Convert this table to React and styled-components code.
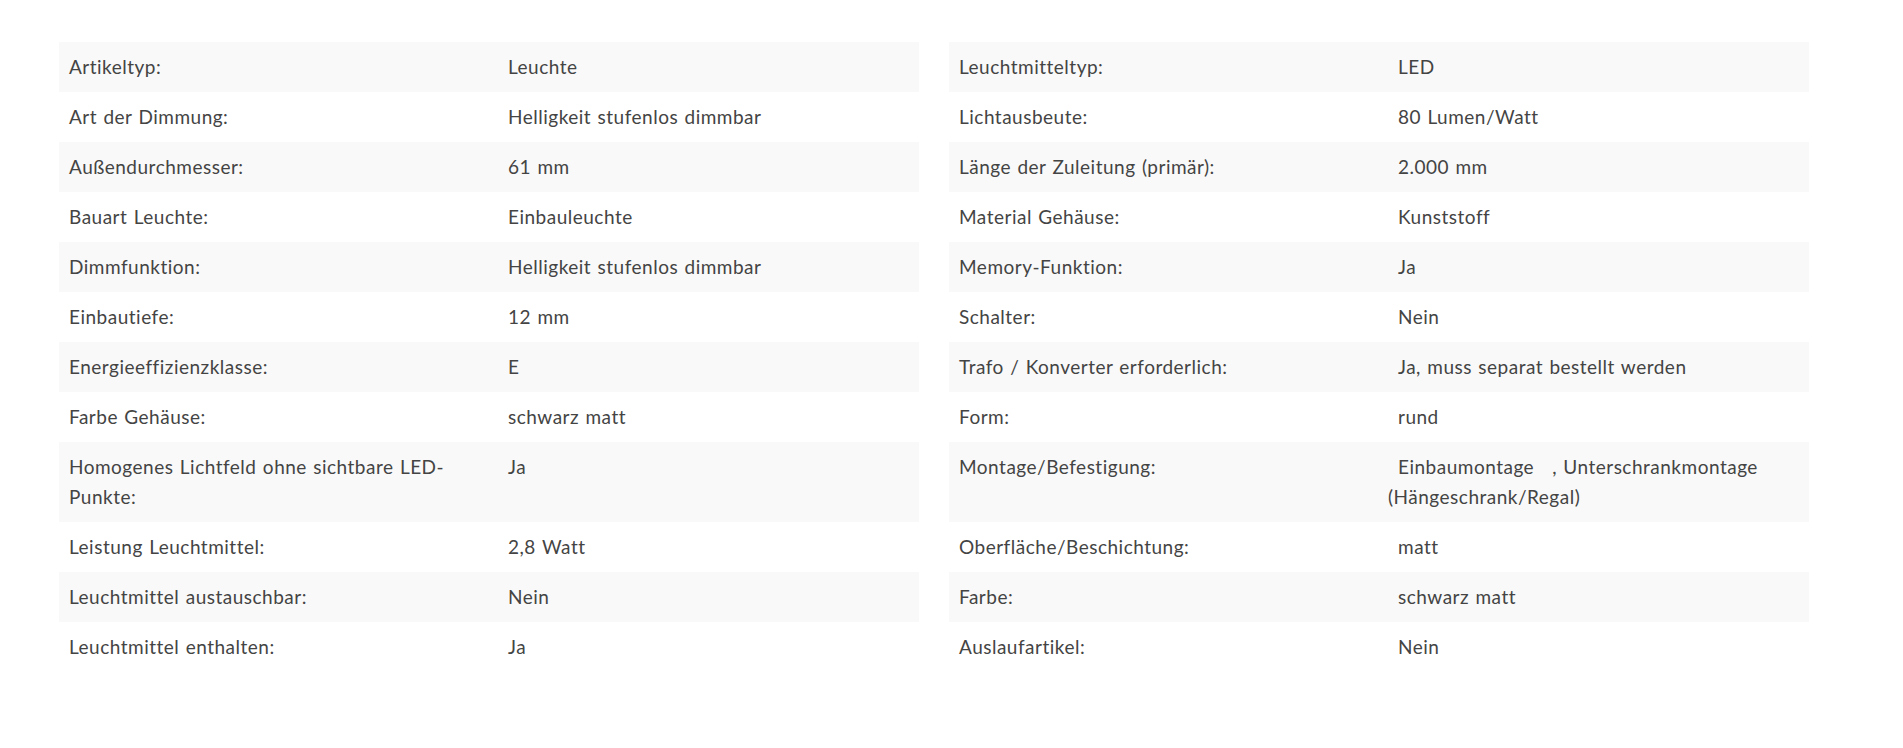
import React from "react";
import styled, { createGlobalStyle } from "styled-components";

const GlobalStyle = createGlobalStyle`
  body {
    margin: 0;
    background: #ffffff;
    font-family: Lato, "Open Sans", sans-serif;
    color: #444444;
  }
`;

const Page = styled.div`
  padding: 42px 0 0 59px;
  display: flex;
  gap: 30px;
  align-items: flex-start;
`;

const SpecTable = styled.table`
  width: 860px;
  border-collapse: collapse;
  table-layout: fixed;
  font-size: 19px;
  line-height: 30px;
  letter-spacing: 0.5px;
  word-spacing: 1px;

  tr:nth-child(odd) {
    background: #f9f9f9;
  }
`;

const Label = styled.td`
  box-sizing: border-box;
  width: 429px;
  padding: 10px;
  vertical-align: top;
`;

const Value = styled.td`
  box-sizing: border-box;
  padding: 10px;
  vertical-align: top;
  text-indent: 10px;
`;

const Part = styled.span`
  margin-right: ${(p) => p.$gap || 0}px;
`;

const leftRows = [
  ["Artikeltyp:", "Leuchte"],
  ["Art der Dimmung:", "Helligkeit stufenlos dimmbar"],
  ["Außendurchmesser:", "61 mm"],
  ["Bauart Leuchte:", "Einbauleuchte"],
  ["Dimmfunktion:", "Helligkeit stufenlos dimmbar"],
  ["Einbautiefe:", "12 mm"],
  ["Energieeffizienzklasse:", "E"],
  ["Farbe Gehäuse:", "schwarz matt"],
  ["Homogenes Lichtfeld ohne sichtbare LED-Punkte:", "Ja"],
  ["Leistung Leuchtmittel:", "2,8 Watt"],
  ["Leuchtmittel austauschbar:", "Nein"],
  ["Leuchtmittel enthalten:", "Ja"],
];

const rightRows = [
  ["Leuchtmitteltyp:", "LED"],
  ["Lichtausbeute:", "80 Lumen/Watt"],
  ["Länge der Zuleitung (primär):", "2.000 mm"],
  ["Material Gehäuse:", "Kunststoff"],
  ["Memory-Funktion:", "Ja"],
  ["Schalter:", "Nein"],
  ["Trafo / Konverter erforderlich:", "Ja, muss separat bestellt werden"],
  ["Form:", "rund"],
  [
    "Montage/Befestigung:",
    <>
      <Part $gap={18}>Einbaumontage</Part>
      <Part>, Unterschrankmontage</Part>{" "}
      <Part>(Hängeschrank/Regal)</Part>
    </>,
  ],
  ["Oberfläche/Beschichtung:", "matt"],
  ["Farbe:", "schwarz matt"],
  ["Auslaufartikel:", "Nein"],
];

const Specs = ({ rows }) => (
  <SpecTable>
    <tbody>
      {rows.map(([label, value], i) => (
        <tr key={i}>
          <Label>{label}</Label>
          <Value>{value}</Value>
        </tr>
      ))}
    </tbody>
  </SpecTable>
);

const App = () => (
  <>
    <GlobalStyle />
    <Page>
      <Specs rows={leftRows} />
      <Specs rows={rightRows} />
    </Page>
  </>
);

export default App;
